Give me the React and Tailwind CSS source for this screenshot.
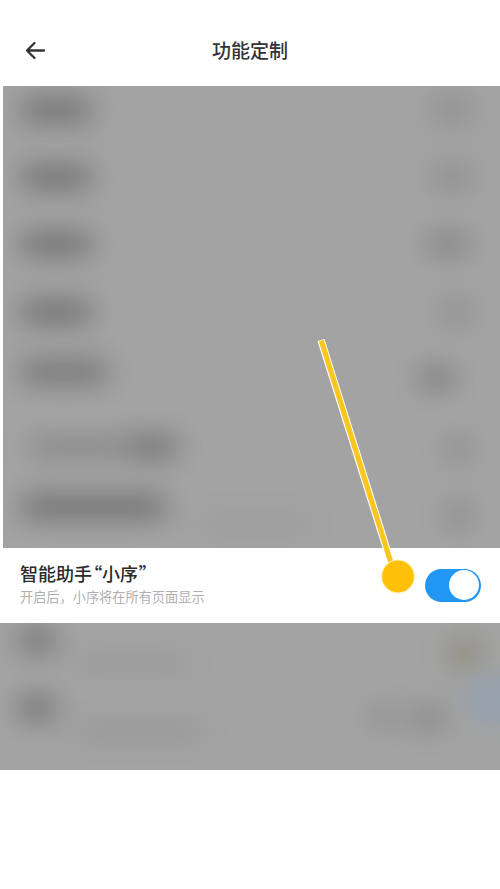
const font = { fontFamily: '"Noto Sans CJK SC", "Noto Sans", sans-serif' };

// blurred rows behind the highlighted setting
function Blur({ className }) {
  return <div className={`bg-[#626262] blur-[14px] ${className}`}></div>;
}

function Row({ height, children }) {
  return <div className="flex justify-between shrink-0" style={{ height }}>{children}</div>;
}

export default function App() {
  return (
    <div style={font} className="relative w-[500px] h-[889px] bg-white overflow-hidden">
      <header className="h-[86px] flex items-center justify-center relative pt-[12px]">
        <svg className="absolute left-[25px] top-[40px]" width="21" height="21" viewBox="0 0 21 21" fill="none" stroke="#333" strokeWidth="2.3" strokeLinecap="round" strokeLinejoin="round">
          <path d="M19 10.5H2.5M9.5 3 2 10.5 9.5 18" />
        </svg>
        <h1 className="text-[19px] font-medium text-[#333] leading-none">功能定制</h1>
      </header>

      <section className="ml-[3px] h-[462px] bg-[#a3a3a3] overflow-hidden pt-[15px] pl-[19px] pr-[30px] flex flex-col">
        <Row height="67px">
          <Blur className="w-[68px] h-[18px]" />
          <Blur className="w-[36px] h-[16px] mt-[1px] opacity-50" />
        </Row>
        <Row height="67px">
          <Blur className="w-[68px] h-[18px]" />
          <Blur className="w-[36px] h-[16px] mt-[1px] opacity-50" />
        </Row>
        <Row height="68px">
          <Blur className="w-[68px] h-[18px]" />
          <Blur className="w-[44px] h-[16px] mt-[1px] opacity-60" />
        </Row>
        <Row height="60px">
          <Blur className="w-[68px] h-[18px]" />
          <Blur className="w-[28px] h-[16px] mt-[1px] opacity-50" />
        </Row>
        <Row height="75px">
          <Blur className="w-[84px] h-[18px] opacity-90" />
          <Blur className="w-[34px] h-[16px] mt-[7px] mr-[16px] opacity-80" />
        </Row>
        <Row height="59px">
          <div className="flex ml-[8px] h-[18px]">
            <Blur className="w-[100px] h-[14px] mt-[2px] opacity-60" />
            <Blur className="w-[46px] h-[18px] opacity-90" />
          </div>
          <Blur className="w-[24px] h-[22px] opacity-40" />
        </Row>
        <Row height="50px">
          <div className="flex flex-col h-[40px]">
            <Blur className="w-[142px] h-[20px] opacity-90" />
            <Blur className="w-[116px] h-[10px] mt-[2px] ml-[174px] opacity-20" />
          </div>
          <Blur className="w-[24px] h-[24px] mt-[6px] opacity-40" />
        </Row>
      </section>

      <section className="h-[75px] bg-white flex items-center justify-between pl-[20px] pr-[19px]">
        <div className="-mt-[3px]">
          <div className="text-[18px] font-medium text-[#2b2b2b] leading-[24px]">
            智能助手<span className="[font-feature-settings:'palt'] ml-[1px]">“</span>小序<span className="[font-feature-settings:'palt'] ml-[1px]">”</span>
          </div>
          <div className="text-[13.2px] text-[#b0b0b0] leading-[20px] mt-[2px]">开启后，小序将在所有页面显示</div>
        </div>
        <div className="w-[56px] h-[33px] rounded-full bg-[#2196f3] flex items-center justify-end pr-[2px] -mt-[1px]">
          <div className="w-[30px] h-[30px] rounded-full bg-white"></div>
        </div>
      </section>

      <section className="h-[147px] bg-[#a3a3a3] overflow-hidden pt-[7px] pl-[20px] pr-[20px] flex flex-col relative">
        <Row height="68px">
          <div>
            <Blur className="w-[34px] h-[20px] opacity-90" />
            <Blur className="w-[114px] h-[10px] mt-[8px] ml-[55px] opacity-25" />
          </div>
          <div className="w-[30px] h-[26px] mt-[10px] bg-[#7d7860] blur-[14px] opacity-60"></div>
        </Row>
        <Row height="60px">
          <div>
            <Blur className="w-[34px] h-[20px] opacity-90" />
            <Blur className="w-[130px] h-[10px] mt-[8px] ml-[55px] opacity-30" />
          </div>
          <div className="flex gap-[12px] mt-[12px] mr-[36px]">
            <Blur className="w-[32px] h-[14px] opacity-40" />
            <Blur className="w-[32px] h-[16px] opacity-60" />
          </div>
        </Row>
        <div className="absolute right-[-24px] top-[52px] w-[60px] h-[50px] rounded-full bg-[#8f9fb4] blur-[10px] opacity-60"></div>
      </section>

      {/* callout drawn over the page */}
      <svg className="absolute left-0 top-0 pointer-events-none" width="500" height="889" viewBox="0 0 500 889" fill="none">
        <path d="M321 340 392 566" stroke="#fff" strokeWidth="7.4" />
        <path d="M321.3 340.5 392 566" stroke="#f8c61c" strokeWidth="5.2" />
        <circle cx="398" cy="576.5" r="16.5" fill="#ffc107" stroke="#fff3c4" strokeWidth="1.2" />
      </svg>
    </div>
  );
}
